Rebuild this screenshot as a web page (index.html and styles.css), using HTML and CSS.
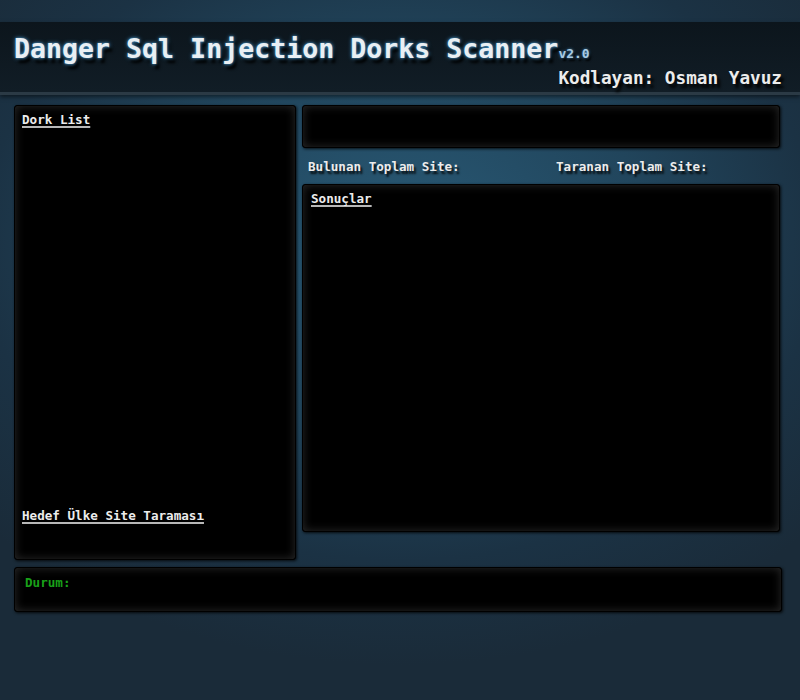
FILE: index.html
```html
<!DOCTYPE html>
<html lang="tr">
<head>
<meta charset="utf-8">
<title>Danger Sql Injection Dorks Scanner</title>
<link rel="stylesheet" href="styles.css">
</head>
<body>
<header class="header">
  <h1 class="title">Danger Sql Injection Dorks Scanner<span class="version">v2.0</span></h1>
  <div class="author">Kodlayan: Osman Yavuz</div>
</header>
<main class="main">
  <div class="columns">
    <section class="panel left-panel">
      <div class="label">Dork List</div>
      <div class="fill"></div>
      <div class="label">Hedef Ülke Site Taraması</div>
    </section>
    <div class="right-col">
      <div class="panel top-box"></div>
      <div class="stats">
        <span class="stat">Bulunan Toplam Site:</span>
        <span class="stat">Taranan Toplam Site:</span>
      </div>
      <section class="panel results">
        <div class="label">Sonuçlar</div>
      </section>
    </div>
  </div>
  <div class="panel status">
    <span class="status-text">Durum:</span>
  </div>
</main>
</body>
</html>
```
FILE: styles.css
```css
html, body {
  margin: 0;
  padding: 0;
  height: 100%;
}
body {
  font-family: "DejaVu Sans Mono", "Liberation Mono", monospace;
  font-weight: bold;
  background: radial-gradient(ellipse 70% 60% at 50% 35%, #295a76 0%, #21455c 45%, #1b3244 75%, #1a2b39 100%);
  background-color: #1a2d3b;
  color: #e6e6e6;
  min-height: 700px;
  overflow: hidden;
}
.header {
  margin-top: 22px;
  height: 70px;
  background: linear-gradient(#0c151c, #111d26);
  border-bottom: 3px solid #2b3a45;
  box-shadow: 0 2px 4px rgba(0,0,0,0.5);
  padding: 0 18px 0 14px;
}
.title {
  margin: 0;
  padding-top: 11px;
  font-size: 26.6px;
  line-height: 32px;
  font-weight: bold;
  color: #e9eff3;
  text-shadow: 0 0 4px #3f86b6, 0 0 2px #3f86b6, 3px 5px 3px #000;
}
.version {
  font-size: 13px;
  color: #a9cbe4;
  text-shadow: 0 0 3px #3f86b6, 2px 3px 2px #000;
}
.author {
  text-align: right;
  font-size: 17.7px;
  line-height: 20px;
  margin-top: -2px;
  color: #ececec;
  text-shadow: 3px 4px 3px #000;
}
.main {
  padding: 10px 18px 0 14px;
}
.columns {
  display: flex;
  gap: 6px;
}
.panel {
  background: #000;
  border: 1px solid #000;
  border-radius: 3px;
  box-shadow: inset 0 0 10px rgba(140,140,140,0.3), 1px 1px 3px rgba(0,0,0,0.8);
  box-sizing: border-box;
}
.left-panel {
  width: 282px;
  height: 455px;
  display: flex;
  flex-direction: column;
  padding: 6px 7px 35px 7px;
}
.fill {
  flex: 1;
}
.label {
  font-size: 12.6px;
  line-height: 16px;
  color: #ececec;
  text-decoration: underline;
  text-decoration-color: #b8b8b8;
  text-underline-offset: 2px;
  text-decoration-thickness: 2px;
}
.right-col {
  width: 478px;
  display: flex;
  flex-direction: column;
}
.top-box {
  height: 43px;
}
.stats {
  height: 36px;
  display: flex;
  align-items: center;
  padding-left: 6px;
  font-size: 12.6px;
  color: #ececec;
  text-shadow: 2px 3px 2px rgba(0,0,0,0.85);
}
.stat:first-child {
  width: 248px;
}
.results {
  height: 348px;
  padding: 6px 8px;
}
.status {
  margin-top: 7px;
  width: 768px;
  height: 45px;
  padding: 4px 10px;
}
.status-text {
  font-size: 12.6px;
  line-height: 16px;
  color: #19a119;
}
```
